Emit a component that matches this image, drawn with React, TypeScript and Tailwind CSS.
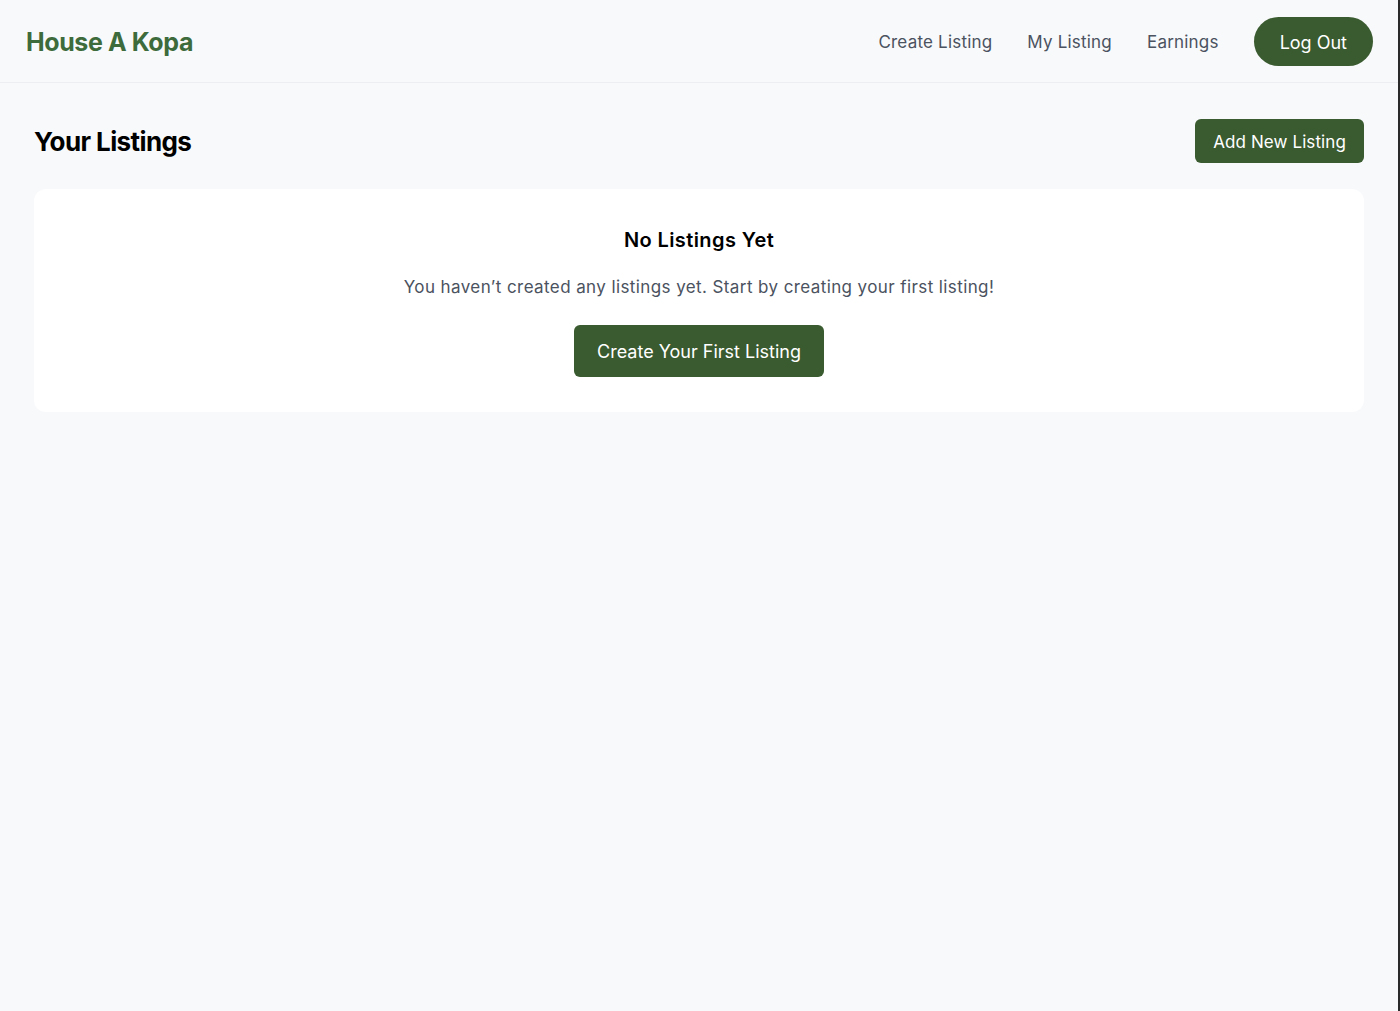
// Host dashboard: empty listings state

const navLinks = ["Create Listing", "My Listing", "Earnings"];

function Header() {
  return (
    <header className="flex h-[83px] items-center justify-between border-b border-[#eceef1] pl-[26px] pr-[25px]">
      <a className="pt-[4px] text-[25px] font-bold tracking-[-0.4px] text-[#3e6b3b]">House A Kopa</a>
      <nav className="flex items-center gap-[35px]">
        {navLinks.map((l) => (
          <a key={l} className="pt-[4px] text-[17px] tracking-[0.2px] text-[#4b5260]">
            {l}
          </a>
        ))}
        <button className="h-[49px] rounded-full bg-[#3a5a2f] px-[26px] pt-[2px] text-[18px] text-white">
          Log Out
        </button>
      </nav>
    </header>
  );
}

export default function App() {
  return (
    <div
      className="min-h-[1011px] border-r-2 border-[#2a2a2a] bg-[#f8f9fb] text-black"
      style={{ fontFamily: "Inter, 'Noto Sans', sans-serif" }}
    >
      <Header />
      <main className="px-[34px] pt-[36px]">
        {/* 標題列 */}
        <div className="flex items-center justify-between">
          <h1 className="text-[26px] font-bold tracking-[-0.6px]">Your Listings</h1>
          <button className="h-[44px] rounded-md bg-[#3a5a2f] px-[18px] pt-[3px] text-[17px] tracking-[0.1px] text-white">
            Add New Listing
          </button>
        </div>

        {/* 空狀態卡片 */}
        <div className="mt-[26px] flex flex-col items-center rounded-xl bg-white pb-[35px] pt-[36px]">
          <h2 className="text-[20px] font-semibold tracking-[0.4px]">No Listings Yet</h2>
          <p className="mt-[20px] text-[17px] tracking-[0.4px] text-[#4b5260]">
            You haven’t created any listings yet. Start by creating your first listing!
          </p>
          <button className="mt-[24px] h-[52px] w-[250px] rounded-md bg-[#3a5a2f] pt-[2px] text-[18px] text-white">
            Create Your First Listing
          </button>
        </div>
      </main>
    </div>
  );
}
